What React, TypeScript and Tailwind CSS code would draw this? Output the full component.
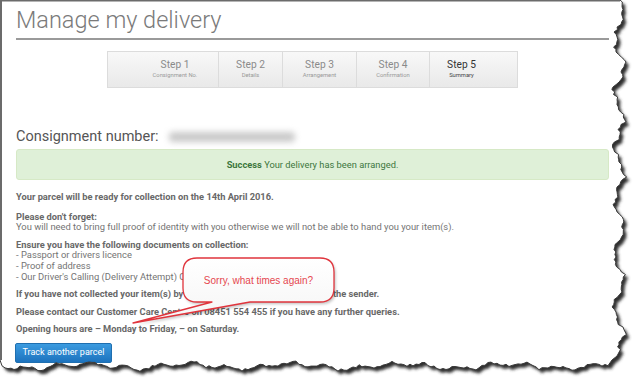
import React from "react";

function rnd(i: number) {
  const s = Math.sin(i * 12.9898 + 78.233) * 43758.5453;
  return s - Math.floor(s);
}

function buildEdge() {
  const pts: string[] = [];
  pts.push("M0,0");
  pts.push("L620,0");
  for (let y = 2; y <= 350; y += 2.5) {
    const x =
      619 +
      4.5 * Math.sin(y / 8.5) +
      2 * Math.sin(y / 3.1 + 1) +
      (rnd(y) - 0.5) * 3.5;
    pts.push(`L${x.toFixed(1)},${y.toFixed(1)}`);
  }
  pts.push("L617,356");
  pts.push("L612,360");
  for (let x = 608; x >= 0; x -= 3) {
    const y =
      366 +
      2.5 * Math.sin(x / 17) +
      1.8 * Math.sin(x / 5.3) +
      (rnd(x + 1000) - 0.5) * 3;
    pts.push(`L${x.toFixed(1)},${y.toFixed(1)}`);
  }
  pts.push("L0,360");
  pts.push("Z");
  return pts.join(" ");
}

const EDGE = buildEdge();

function TornOverlay() {
  return (
    <svg
      className="absolute inset-0 pointer-events-none"
      width={640}
      height={389}
      viewBox="0 0 640 389"
    >
      <defs>
        <clipPath id="outside">
          <path d={`M0,0 H640 V389 H0 Z ${EDGE}`} clipRule="evenodd" />
        </clipPath>
        <filter id="sh" x="-10%" y="-10%" width="120%" height="120%">
          <feGaussianBlur stdDeviation="1.5" />
        </filter>
      </defs>
      <g clipPath="url(#outside)">
        <rect x={0} y={0} width={640} height={389} fill="#ffffff" />
        <path d={EDGE} transform="translate(3,3.5)" fill="#2e2e2e" filter="url(#sh)" />
      </g>
      <path d={EDGE} fill="none" stroke="#3a3a3a" strokeWidth={1} />
      <line x1={1} y1={0} x2={1} y2={360} stroke="#6b6b6b" strokeWidth={2} />
      <line x1={0} y1={0.75} x2={620} y2={0.75} stroke="#6b6b6b" strokeWidth={1.5} />
    </svg>
  );
}

const CALLOUT_D =
  "M197,258 H320 Q334,258 334,272 V288 Q334,302 320,302 H250 L133,323 L212,302 H197 Q183,302 183,288 V272 Q183,258 197,258 Z";

function Callout() {
  return (
    <div className="absolute left-0 top-0 w-[640px] h-[389px] pointer-events-none">
      <svg className="absolute inset-0" width={640} height={389} viewBox="0 0 640 389">
        <defs>
          <filter id="csh" x="-20%" y="-20%" width="140%" height="140%">
            <feGaussianBlur stdDeviation="1.5" />
          </filter>
          <linearGradient id="cfill" x1="0" y1="0" x2="0" y2="1">
            <stop offset="0" stopColor="#ffffff" />
            <stop offset="1" stopColor="#f5f5f5" />
          </linearGradient>
        </defs>
        <path d={CALLOUT_D} fill="#000" opacity={0.25} transform="translate(1.5,2)" filter="url(#csh)" />
        <path
          d={CALLOUT_D}
          fill="url(#cfill)"
          stroke="#e0343c"
          strokeWidth={1.3}
          strokeLinejoin="round"
        />
      </svg>
      <div className="absolute left-[183px] top-[258px] w-[151px] h-[44px] flex items-center justify-center text-[10px] text-[#e5474f] font-['Liberation_Sans',Arial,sans-serif]">
        Sorry, what times again?
      </div>
    </div>
  );
}

const steps = [
  { t: "Step 1", s: "Consignment No.", w: "w-[86px]", active: false },
  { t: "Step 2", s: "Details", w: "w-[64px]", active: false },
  { t: "Step 3", s: "Arrangement", w: "w-[74px]", active: false },
  { t: "Step 4", s: "Confirmation", w: "w-[73px]", active: false },
  { t: "Step 5", s: "Summary", w: "w-[64px]", active: true },
];

export default function App() {
  return (
    <div className="relative w-[640px] h-[389px] overflow-hidden bg-white font-['Roboto',sans-serif]">
      <div className="pl-[16px] pr-[31px] pt-[5px]">
        <h1 className="text-[23.5px] leading-[30px] font-light text-[#7a7a7a] border-b-2 border-[#9a9a9a] pb-[3px]">
          Manage my delivery
        </h1>

        <div className="flex justify-center mt-[11px]">
          <div className="flex h-[37px] px-[24px] border border-[#dcdcdc] bg-gradient-to-b from-[#f8f8f8] to-[#e9e9e9]">
            {steps.map((st, i) => (
              <div
                key={st.t}
                className={`${st.w} flex flex-col items-center justify-center ${i > 0 ? "border-l border-[#dcdcdc]" : ""}`}
              >
                <div className={`text-[10.2px] leading-[12px] ${st.active ? "text-[#333]" : "text-[#8a8a8a]"}`}>
                  {st.t}
                </div>
                <div className={`text-[5.8px] leading-[9px] ${st.active ? "text-[#444]" : "text-[#999]"}`}>
                  {st.s}
                </div>
              </div>
            ))}
          </div>
        </div>

        <div className="flex items-center mt-[39px] h-[20px]">
          <span className="text-[14.5px] text-[#555]">Consignment number:</span>
          <div className="ml-[4px] w-[138px] h-[18px] relative">
            <div className="absolute left-[6px] right-[6px] top-[4px] bottom-[4px] bg-[#c9c9c9] blur-[3px] rounded" />
          </div>
        </div>

        <div className="mt-[2px] h-[31px] flex items-center justify-center rounded-[3px] border border-[#d6e9c6] bg-[#dff0d8] text-[9.3px] text-[#3c763d]">
          <span className="font-bold">Success</span>
          <span>&nbsp;Your delivery has been arranged.</span>
        </div>

        <div className="mt-[12px] text-[9.4px] leading-[10.6px] text-[#747474]">
          <p className="font-bold text-[9.3px] text-[#686868] mb-[9px]">Your parcel will be ready for collection on the 14th April 2016.</p>
          <p className="mb-[7px]">
            <span className="font-bold text-[9.3px] text-[#686868]">Please don't forget:</span>
            <br />
            You will need to bring full proof of identity with you otherwise we will not be able to hand you your item(s).
          </p>
          <p className="mb-[7px]">
            <span className="font-bold text-[9.3px] text-[#686868]">Ensure you have the following documents on collection:</span>
            <br />- Passport or drivers licence
            <br />- Proof of address
            <br />- Our Driver's Calling (Delivery Attempt) Card
          </p>
          <p className="font-bold text-[9.3px] text-[#686868] mb-[7px]">
            If you have not collected your item(s) by 28/04/2016 this will be returned to the sender.
          </p>
          <p className="font-bold text-[9.3px] text-[#686868] mb-[7px]">
            Please contact our Customer Care Centre on 08451 554 455 if you have any further queries.
          </p>
          <p className="font-bold text-[9.3px] text-[#686868]">Opening hours are – Monday to Friday, – on Saturday.</p>
        </div>

        <div className="flex mt-[8px]">
          <button className="-ml-[1px] h-[20px] w-[97px] flex items-center justify-center rounded-[2px] border border-[#1f6fb0] bg-gradient-to-b from-[#3b9be0] to-[#1d73be] text-white text-[9px]">
            Track another parcel
          </button>
        </div>
      </div>

      <Callout />
      <TornOverlay />
    </div>
  );
}
